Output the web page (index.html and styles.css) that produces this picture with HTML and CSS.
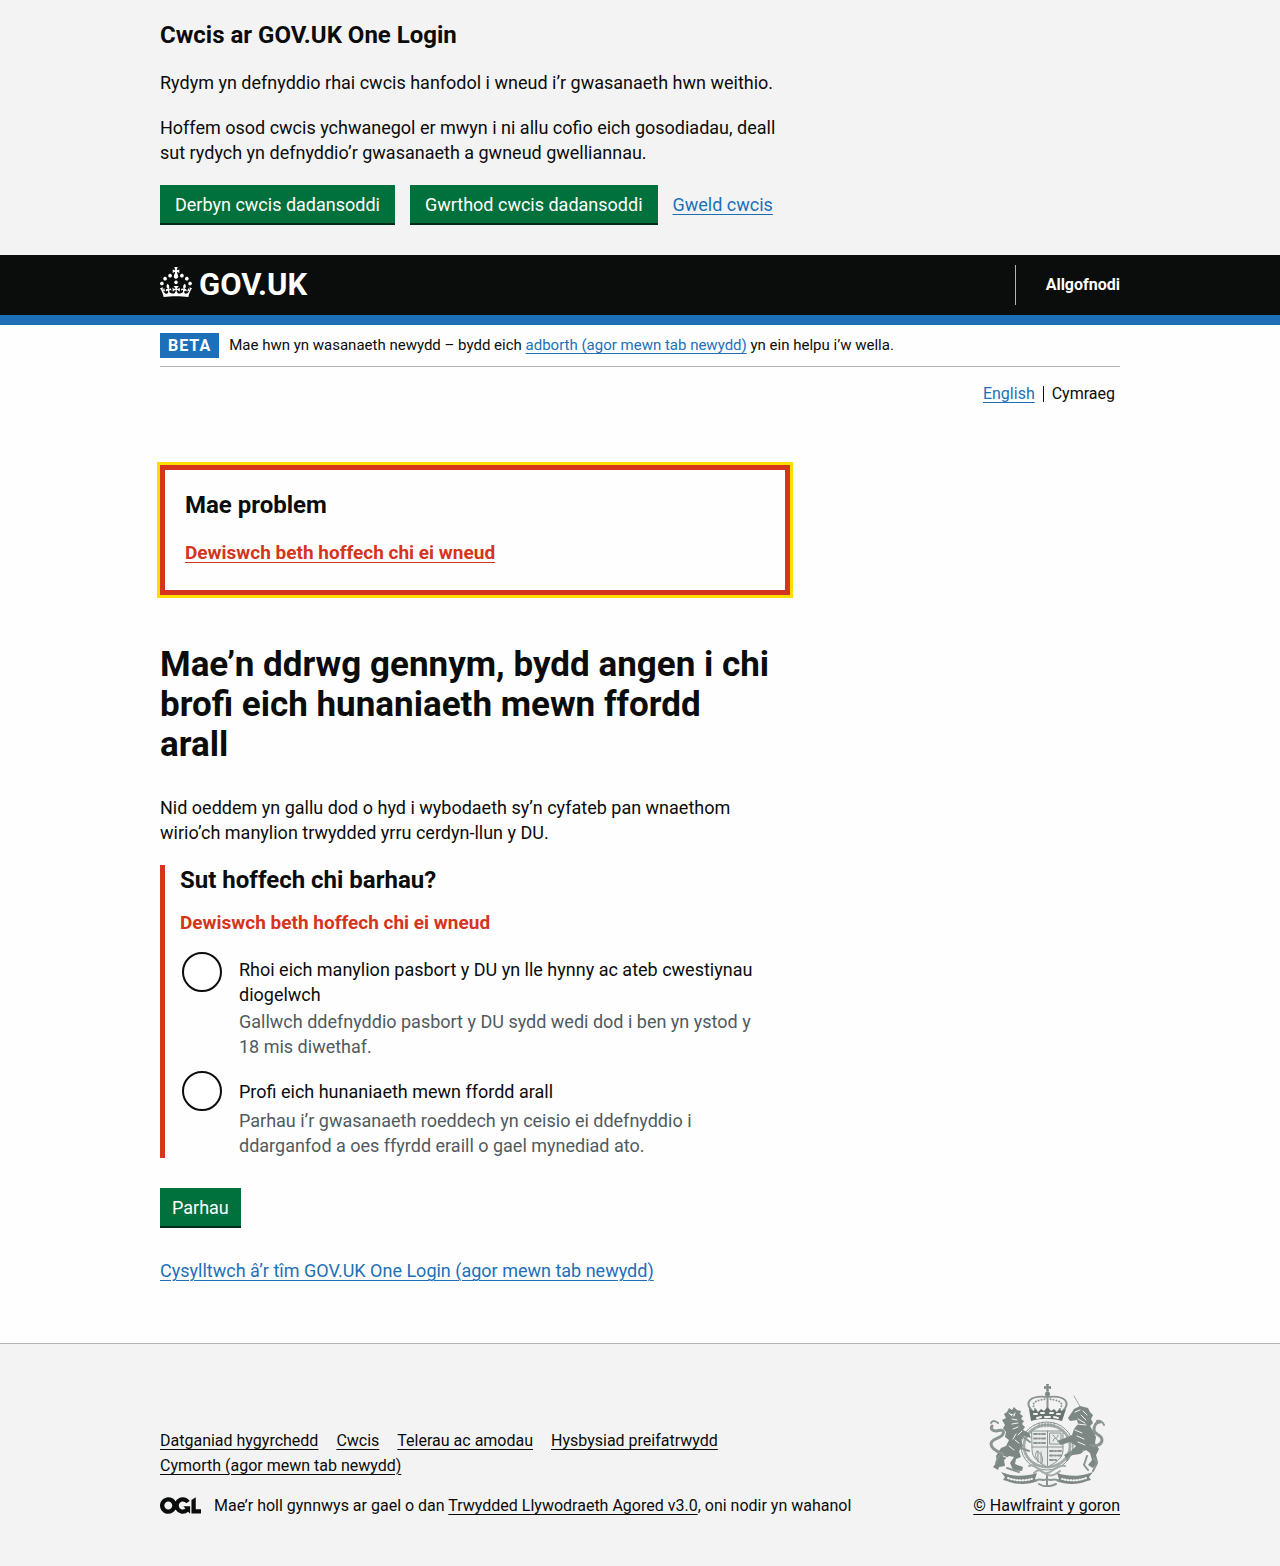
FILE: index.html
```html
<!DOCTYPE html>
<html lang="cy">
<head>
<meta charset="utf-8">
<meta name="viewport" content="width=device-width, initial-scale=1">
<title>Mae’n ddrwg gennym, bydd angen i chi brofi eich hunaniaeth mewn ffordd arall – GOV.UK One Login</title>
<link rel="stylesheet" href="styles.css">
</head>
<body>
<section class="cookie-banner" aria-label="Cwcis ar GOV.UK One Login">
  <div class="container">
    <div class="two-thirds">
      <h2 class="heading-m">Cwcis ar GOV.UK One Login</h2>
      <p class="body">Rydym yn defnyddio rhai cwcis hanfodol i wneud i’r gwasanaeth hwn weithio.</p>
      <p class="body">Hoffem osod cwcis ychwanegol er mwyn i ni allu cofio eich gosodiadau, deall sut rydych yn defnyddio’r gwasanaeth a gwneud gwelliannau.</p>
      <div class="button-group">
        <button type="button" class="button">Derbyn cwcis dadansoddi</button>
        <button type="button" class="button">Gwrthod cwcis dadansoddi</button>
        <a class="link" href="#cwcis">Gweld cwcis</a>
      </div>
    </div>
  </div>
</section>

<header class="header">
  <div class="container header-row">
    <a class="logo" href="#gov">
      <svg class="crown" viewBox="0 0 32 30" width="32" height="30" fill="currentColor" aria-hidden="true"><path fill-rule="evenodd" d="M22.6 10.4c-1 .4-2-.1-2.4-1-.4-.9.1-2 1-2.4.9-.4 2 .1 2.4 1s-.1 2-1 2.4m-5.9 6.7c-.9.4-2-.1-2.4-1-.4-.9.1-2 1-2.4.9-.4 2 .1 2.4 1s-.1 2-1 2.4m10.8-3.7c-1 .4-2-.1-2.4-1-.4-.9.1-2 1-2.4.9-.4 2 .1 2.4 1s0 2-1 2.4m3.3 4.8c-1 .4-2-.1-2.4-1-.4-.9.1-2 1-2.4.9-.4 2 .1 2.4 1s-.1 2-1 2.4M17 4.700l2.3 1.200V2.500l-2.300.7-.2-.2.9-3h-3.400l.9 3-.2.2c-.1.1-2.300-.7-2.300-.7v3.400L15 4.700c.1.1.1.2.2.2l-1.300 4c-.1.2-.1.4-.1.6 0 1.100.8 2 1.900 2.200h.7c1-.2 1.900-1.100 1.900-2.100 0-.2 0-.4-.1-.6l-1.300-4c-.1-.2 0-.2.1-.3m-7.600 5.700c.9.4 2-.1 2.400-1 .4-.9-.1-2-1-2.400-.9-.4-2 .1-2.400 1s0 2 1 2.400m-5 3c.9.4 2-.1 2.400-1 .4-.9-.1-2-1-2.400-.9-.4-2 .1-2.400 1s.1 2 1 2.400m-3.200 4.800c.9.4 2-.1 2.400-1 .4-.9-.1-2-1-2.400-.9-.4-2 .1-2.400 1s0 2 1 2.400m14.800 11c4.400 0 8.600.3 12.300.8 1.100-4.500 2.400-7 3.700-8.800l-2.500-.9c.2 1.300.3 1.900 0 2.700-.4-.4-.8-1.100-1.100-2.300l-1.200 4c.7-.5 1.300-.8 2-.9-1.100 2.500-2.600 3.100-3.500 3-1.100-.2-1.700-1.200-1.500-2.100.3-1.200 1.500-1.500 2.100-.1 1.100-2.300-.8-3-2-2.300 1.900-1.900 2.100-3.500.6-5.600-2.100 1.600-2.100 3.200-1.200 5.500-1.200-1.400-3.200-.6-2.500 1.600.9-1.400 2.100-.5 1.900.8-.2 1.100-1.700 2.100-3.500 1.900-2.700-.2-2.900-2.100-2.900-3.600.7-.1 1.900.5 2.900 1.900l.4-4.300c-1.100 1.100-2.100 1.400-3.200 1.400.4-1.200 2.100-3 2.100-3h-5.400s1.700 1.900 2.100 3c-1.100 0-2.100-.2-3.200-1.400l.4 4.300c1-1.400 2.200-2 2.900-1.900-.1 1.500-.2 3.400-2.900 3.600-1.900.2-3.400-.8-3.500-1.900-.2-1.300 1-2.200 1.900-.8.7-2.300-1.200-3-2.500-1.600.9-2.200.9-3.900-1.200-5.500-1.500 2-1.300 3.700.6 5.600-1.200-.7-3.100 0-2 2.300.6-1.400 1.800-1.100 2.100.1.2.9-.3 1.900-1.500 2.100-.9.2-2.400-.5-3.500-3 .6 0 1.200.3 2 .9l-1.200-4c-.3 1.100-.7 1.900-1.100 2.300-.3-.8-.2-1.400 0-2.700l-2.900.9C1.300 23 2.600 25.500 3.700 30c3.700-.5 7.900-.8 12.300-.8"/></svg>
      <span>GOV.UK</span>
    </a>
    <nav class="header-nav" aria-label="Cyfrif"><a href="#allgofnodi">Allgofnodi</a></nav>
  </div>
</header>

<div class="container">
  <div class="phase-banner">
    <strong class="tag">BETA</strong>
    <span>Mae hwn yn wasanaeth newydd – bydd eich <a class="link" href="#adborth">adborth (agor mewn tab newydd)</a> yn ein helpu i’w wella.</span>
  </div>
  <nav class="language" aria-label="Dewis iaith">
    <ul class="language-list">
      <li><a class="link" href="#en" lang="en">English</a></li>
      <li aria-current="true">Cymraeg</li>
    </ul>
  </nav>

  <main class="main two-thirds">
    <div class="error-summary" role="alert">
      <h2 class="heading-m">Mae problem</h2>
      <a class="link error-link" href="#pasbort">Dewiswch beth hoffech chi ei wneud</a>
    </div>

    <h1 class="heading-l">Mae’n ddrwg gennym, bydd angen i chi brofi eich hunaniaeth mewn ffordd arall</h1>
    <p class="body">Nid oeddem yn gallu dod o hyd i wybodaeth sy’n cyfateb pan wnaethom wirio’ch manylion trwydded yrru cerdyn-llun y DU.</p>

    <form>
      <div class="form-group">
        <fieldset class="fieldset" aria-describedby="gwall">
          <legend class="heading-m">Sut hoffech chi barhau?</legend>
          <p class="error-message" id="gwall">Dewiswch beth hoffech chi ei wneud</p>
          <div class="radios">
            <div class="radio-item">
              <input class="radio" type="radio" name="dewis" id="pasbort" aria-describedby="pasbort-hint">
              <label class="radio-label" for="pasbort">Rhoi eich manylion pasbort y DU yn lle hynny ac ateb cwestiynau diogelwch</label>
              <div class="hint" id="pasbort-hint">Gallwch ddefnyddio pasbort y DU sydd wedi dod i ben yn ystod y 18&nbsp;mis diwethaf.</div>
            </div>
            <div class="radio-item">
              <input class="radio" type="radio" name="dewis" id="arall" aria-describedby="arall-hint">
              <label class="radio-label" for="arall">Profi eich hunaniaeth mewn ffordd arall</label>
              <div class="hint" id="arall-hint">Parhau i’r gwasanaeth roeddech yn ceisio ei ddefnyddio i ddarganfod a oes ffyrdd eraill o gael mynediad ato.</div>
            </div>
          </div>
        </fieldset>
      </div>
      <button type="button" class="button">Parhau</button>
    </form>
    <p class="contact"><a class="link" href="#cysylltu">Cysylltwch â’r tîm GOV.UK One Login (agor mewn tab newydd)</a></p>
  </main>
</div>

<footer class="footer">
  <div class="container footer-row">
    <div class="footer-main">
      <ul class="footer-links">
        <li><a href="#hygyrchedd">Datganiad hygyrchedd</a></li>
        <li><a href="#polisi-cwcis">Cwcis</a></li>
        <li><a href="#telerau">Telerau ac amodau</a></li>
        <li><a href="#preifatrwydd">Hysbysiad preifatrwydd</a></li>
        <li><a href="#cymorth">Cymorth (agor mewn tab newydd)</a></li>
      </ul>
      <div class="licence">
        <svg viewBox="0 0 483.2 195.7" width="41" height="17" fill="currentColor" aria-hidden="true"><path d="M421.5 142.8V.1l-50.7 32.3v161.1h112.4v-50.7zm-122.3-9.6A47.12 47.12 0 0 1 221 97.8c0-26 21.1-47.1 47.1-47.1 16.7 0 31.4 8.7 39.7 21.8l42.7-27.2A97.63 97.63 0 0 0 268.1 0c-36.5 0-68.3 20.1-85.1 49.7A98 98 0 0 0 97.8 0C43.9 0 0 43.9 0 97.8s43.9 97.8 97.8 97.8c36.5 0 68.3-20.1 85.1-49.7a97.76 97.76 0 0 0 149.6 25.4l19.4 22.2h3v-87.8h-80l24.3 27.5zM97.8 145c-26 0-47.1-21.1-47.1-47.1s21.1-47.1 47.1-47.1 47.1 21.1 47.1 47.1S123.8 145 97.8 145"/></svg>
        <span>Mae’r holl gynnwys ar gael o dan <a href="#trwydded">Trwydded Llywodraeth Agored v3.0</a>, oni nodir yn wahanol</span>
      </div>
    </div>
    <div class="copyright">
      <svg class="crest" viewBox="0 0 116 103" width="116" height="103" aria-hidden="true" fill="none" stroke="#8a9491" stroke-linecap="round" stroke-linejoin="round">
        <!-- crown -->
        <path fill="#7d8884" stroke="none" d="M57 0h3l-.5 2.500 2.500-.5v3l-2.500-.5.5 3h-3l.5-3-2.500.5V2l2.500.5z"/>
        <circle cx="58.500" cy="10" r="2.500" fill="#7d8884" stroke="none"/>
        <path stroke-width="2" d="M58.500 13v12M43 27c-8-9-2-16 15.500-14 17.500-2 23.500 5 15.500 14"/>
        <path stroke-width="2" stroke-dasharray="0 3" d="M46 25c-5-7 2-9 12-10M71 25c5-7-2-9-12-10"/>
        <path fill="#68736f" stroke="none" d="m40 25 4 2 3-2 2 3 3-3 3 2 3.500-4 3.500 4 3-2 3 3 2-3 3 2 4-2-4 12c-11-3-21-3-31 0z"/>
        <path stroke="#f3f3f3" stroke-width="2" d="M45 30h3m4-1h3m6 0h3m4 1h3M48 34l4-1m4 0h5m4 0 4 1"/>
        <!-- garter and quartered shield -->
        <ellipse cx="58" cy="62" rx="26" ry="24" stroke-width="1"/>
        <ellipse cx="58" cy="62" rx="23" ry="21" stroke-width="3" stroke-dasharray="1 2" stroke="#a3aba8"/>
        <path stroke-width="1" d="M50 39v4m3-4v4m3-4v4m3-4v4m3-4v4m3-4v4"/>
        <path fill="#e9ebea" d="M43 47h31v19c0 9-8 13-15.500 17C51 79 43 75 43 66z"/>
        <path stroke-width="1" d="M58.500 47v35M43 63h31"/>
        <path stroke-width="2" stroke-dasharray="3 2 1 2" d="M45 50h12M45 54.500h12M45 59h12M61 67h12M61 71.500h11M61 76h7"/>
        <path stroke-width="1" d="M61 49h11v11H61zM64 57c0-4 5-1 5-6m-5 0 5 6M49 77c-3-4-3-7-1-10 4 3 7 6 5 12m-4-12v11m3-10v12"/>
        <path stroke-width="2" stroke="#a3aba8" d="M40 82c6-3 8 3 13 6s8 0 11-2 6-5 12-4M45 89c5-5 8-2 12 1s8 2 14-3"/>
        <!-- lion -->
        <path fill="#7d8884" stroke="none" d="m20 24 3 2 2-3 3 3 4 1-1 3 3 2-2 3 3 2-2 3 3 3-2 3 6 3 2 5-7-2-3 4 2 6-4 5 2 6-5 2-1 5 8 3-1 4-9-1-3-7 4-6-5-1-5 4 1 6-6 1-1 3-5-3 4-5-1-6 5-8 5-2 3-6-4-3 1-5-3-4 2-3-3-5 4-2-2-4 3-2z"/>
        <path stroke="#f3f3f3" stroke-width="1" d="m21 30 4 1m-2 4 5 1m-5 4 6-1m-5 6 5-2m0 8 4-4m-7 9 4 3m-10 3 5 4m2-16-3 5m-4-26 3 3m3-3-1 3m-11 40 5 2"/>
        <path stroke-width="3" d="M14 70c-5-2-12-5-12-10 0-6 10-5 12-10s-3-4-7-3c-3 0-6-2-4-5"/>
        <path stroke-width="2" d="M2 39c2-3 5-2 7 0M10 72l-3 7m26-27 8 6m-9 6 8 3M18 84l12 4"/>
        <!-- unicorn -->
        <path stroke-width="1" stroke="#a3aba8" d="m85 12 7 12"/>
        <path fill="#7d8884" stroke="none" d="m85 25 6-3 4 1 4 1 2 4 3 3-2 4 2 4-3 3 3 5 3 6-1 6 4 6-3 6 2 7-5 6-5-3 4-5-2-7-4-3-6 4-7 1-7 3-2-3 7-4 5-5-6-4-9 3-4-4 8-3 7-3 2-6 4-5-1-4-7 1-2-3z"/>
        <path stroke="#f3f3f3" stroke-width="1" d="m86 28 5-2m3 1 4 4m-6 0 5 5m-8-1 7 4m-10 7 7 3m-5 3 7 3m-6 3 7 3m-8-21 9 1m-3 26 6 3m-4 2 5 4"/>
        <path stroke-width="3" d="M102 61c4 2 11 0 11-5 0-6-8-5-8-10 0-4 2-8 6-8"/>
        <path stroke-width="2" d="M108 37c3-1 6 1 7 4M98 72l-3 9 4 5m-17-17-4 7M105 74l3 5-4 8"/>
        <!-- motto scroll -->
        <path fill="#7d8884" stroke="none" d="m12 88 6 2c10 3 21 2 30-1l-2 6 3 2c-10 4-22 4-31 0l-4-1 2-3zM104 88l-6 2c-10 3-21 2-30-1l2 6-3 2c10 4 22 4 31 0l4-1-2-3z"/>
        <path stroke="#f3f3f3" stroke-width="2" stroke-dasharray="1 2" d="M19 94c8 3 16 3 24 1M97 94c-8 3-16 3-24 1"/>
        <path stroke-width="2" d="M46 97c5-4 8 1 12-2 4 3 7-2 12 2M50 100c5 3 11 3 17 0M58 92v9"/>
      </svg>
      <a href="#hawlfraint">© Hawlfraint y goron</a>
    </div>
  </div>
</footer>
</body>
</html>
```
FILE: styles.css
```css
* { box-sizing: border-box; }

body {
  margin: 0;
  background: #fefefe;
  color: #0b0c0c;
  font-family: Roboto, "Liberation Sans", sans-serif;
  font-size: 18px;
  line-height: 25px;
}

h1, h2, p, ul { margin: 0; padding: 0; }
ul { list-style: none; }

a {
  color: inherit;
  text-decoration-thickness: 1px;
  text-underline-offset: 3px;
}

.link { color: #1d70b8; }

.container {
  max-width: 960px;
  margin: 0 auto;
}

.two-thirds { max-width: 630px; }

.heading-m {
  padding: 0;
  font-size: 24px;
  font-weight: 700;
  line-height: 30px;
}

.heading-l {
  margin-bottom: 30px;
  padding-right: 15px;
  font-size: 35px;
  font-weight: 700;
  line-height: 40px;
}

.body { margin-bottom: 20px; }

.button {
  padding: 7px 12px 6px;
  border: 0;
  background: #00703c;
  box-shadow: 0 2px 0 #002d18;
  color: #fff;
  font: inherit;
  cursor: pointer;
}

/* Cookie banner */
.cookie-banner {
  padding: 20px 0 32px;
  background: #f3f3f3;
}
.cookie-banner .heading-m { margin-bottom: 20px; }
.button-group {
  display: flex;
  flex-wrap: wrap;
  align-items: center;
  gap: 15px;
}
.button-group .button { padding-inline: 15px; }

/* Header */
.header {
  border-bottom: 10px solid #1d70b8;
  background: #0b0c0c;
  color: #fff;
}
.header-row {
  display: flex;
  align-items: center;
  justify-content: space-between;
  padding: 10px 0;
}
.logo {
  display: flex;
  align-items: center;
  gap: 7px;
  font-size: 31px;
  font-weight: 700;
  line-height: 40px;
  text-decoration: none;
}
.crown { margin-bottom: 6px; }
.header-nav {
  padding-left: 30px;
  border-left: 1px solid #b1b4b6;
  font-size: 16px;
  font-weight: 700;
  line-height: 40px;
}
.header-nav a { text-decoration: none; }

.phase-banner {
  display: flex;
  align-items: center;
  gap: 10px;
  padding: 8px 0;
  border-bottom: 1px solid #b1b4b6;
  font-size: 15px;
}
.tag {
  padding: 0 8px;
  background: #1d70b8;
  color: #fff;
  font-size: 16px;
  letter-spacing: 1px;
}

.language {
  padding: 14px 5px 0;
  font-size: 16px;
}
.language-list {
  display: flex;
  align-items: center;
  justify-content: flex-end;
  gap: 8px;
}
.language-list li + li {
  padding-left: 8px;
  border-left: 1px solid #0b0c0c;
  line-height: 16px;
}

.main { padding: 59px 0 60px; }

.error-summary {
  margin-bottom: 50px;
  padding: 20px 20px 25px;
  border: 5px solid #d4351c;
  outline: 3px solid #ffdd00;
}
.error-summary .heading-m { margin-bottom: 20px; }
.error-link, .error-message {
  color: #d4351c;
  font-size: 19px;
  font-weight: 700;
}

.form-group {
  margin-bottom: 30px;
  padding-left: 15px;
  border-left: 5px solid #d4351c;
}
.fieldset {
  min-width: 0;
  margin: 0;
  padding: 0;
  border: 0;
}
.fieldset .heading-m { margin-bottom: 15px; }
.error-message { margin-bottom: 15px; }

.radios { display: grid; gap: 10px; }
.radio-item {
  display: grid;
  grid-template-columns: 44px 1fr;
}
.radio {
  appearance: none;
  width: 40px;
  height: 40px;
  margin: 2px;
  border: 2px solid #0b0c0c;
  border-radius: 50%;
  background: #fff;
}
.radio:checked { box-shadow: inset 0 0 0 8px #fff; background: #0b0c0c; }
.radio-label {
  align-self: center;
  padding: 7px 15px;
}
.hint {
  grid-column: 2;
  margin-top: -5px;
  padding: 0 15px;
  color: #505a5f;
}

.contact { margin-top: 32px; }

/* Footer */
.footer {
  padding: 40px 0 48px;
  border-top: 1px solid #b1b4b6;
  background: #f3f3f3;
  font-size: 16px;
}
.footer-row {
  display: flex;
  align-items: flex-end;
  gap: 30px;
}
.footer-main { flex: 1; }
.footer-links {
  display: flex;
  flex-wrap: wrap;
  column-gap: 18px;
  margin-bottom: 15px;
}
.licence {
  display: flex;
  align-items: center;
  gap: 13px;
}
.copyright {
  display: flex;
  flex-direction: column;
  align-items: center;
  gap: 6px;
}
```
